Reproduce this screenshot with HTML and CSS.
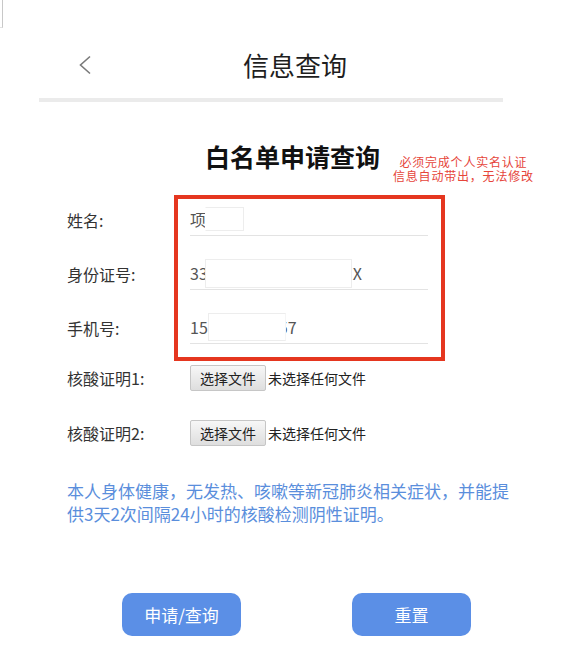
FILE: index.html
```html
<!DOCTYPE html>
<html lang="zh-CN">
<head>
<meta charset="utf-8">
<title>信息查询</title>
<link rel="stylesheet" href="styles.css">
</head>
<body>
<div class="corner"></div>
<header class="header">
  <svg class="back" width="14" height="20" viewBox="0 0 14 20"><polyline points="12,1.5 2.5,10 12,18.5" fill="none" stroke="#7a7a7a" stroke-width="1.6"/></svg>
  <h1 class="page-title">信息查询</h1>
</header>
<div class="bar"></div>

<div class="title-row">
  <h2 class="form-title">白名单申请查询</h2>
  <p class="note">必须完成个人实名认证<br>信息自动带出，无法修改</p>
</div>

<section class="form">
  <div class="highlight"></div>
  <div class="row">
    <span class="label">姓名:</span>
    <div class="field">项<span class="mask mask-name"></span></div>
  </div>
  <div class="row">
    <span class="label">身份证号:</span>
    <div class="field">33<span class="mask mask-id"></span>X</div>
  </div>
  <div class="row">
    <span class="label">手机号:</span>
    <div class="field">15<span class="mask mask-phone"></span>57</div>
  </div>
  <div class="file-row first">
    <span class="label">核酸证明1:</span>
    <div class="file"><span class="file-btn">选择文件</span><span class="file-name">未选择任何文件</span></div>
  </div>
  <div class="file-row">
    <span class="label">核酸证明2:</span>
    <div class="file"><span class="file-btn">选择文件</span><span class="file-name">未选择任何文件</span></div>
  </div>
</section>

<p class="notice">本人身体健康，无发热、咳嗽等新冠肺炎相关症状，并能提供3天2次间隔24小时的核酸检测阴性证明。</p>

<div class="actions">
  <button class="btn">申请/查询</button>
  <button class="btn">重置</button>
</div>
</body>
</html>
```

FILE: styles.css
```css
html, body {
  margin: 0;
  padding: 0;
  background: #ffffff;
}
body {
  font-family: "Noto Sans CJK SC", "Noto Sans", sans-serif;
  color: #333;
  position: relative;
  width: 568px;
  height: 647px;
  overflow: hidden;
}
.corner {
  position: absolute;
  left: 0;
  top: 0;
  width: 2px;
  height: 27px;
  border-right: 1px solid #c8c8c8;
  border-bottom: 1px solid #e2e2e2;
}
.header {
  height: 98px;
  box-sizing: border-box;
  padding: 32px 0 0 78px;
  display: flex;
  align-items: center;
}
.back {
  display: block;
}
.page-title {
  margin: 0 0 0 151px;
  font-size: 26px;
  font-weight: 400;
  line-height: 34px;
  color: #1e1e1e;
}
.bar {
  margin: 0 65px 0 39px;
  height: 4px;
  background: #ebebeb;
}
.title-row {
  display: flex;
  align-items: flex-start;
  margin-top: 39px;
  padding-left: 205px;
  height: 30px;
}
.form-title {
  margin: 0;
  font-size: 25px;
  line-height: 30px;
  font-weight: 700;
  color: #111;
}
.note {
  margin: 14px 0 0 13px;
  font-size: 12px;
  letter-spacing: 0.8px;
  line-height: 14px;
  color: #e6453a;
  text-align: center;
  white-space: nowrap;
}
.form {
  position: relative;
  margin-top: 32px;
  padding-left: 67px;
}
.highlight {
  position: absolute;
  left: 174px;
  top: -8px;
  width: 263px;
  height: 158px;
  border: 4px solid #e5361f;
  pointer-events: none;
}
.row {
  display: grid;
  grid-template-columns: 123px 238px;
  align-items: center;
  margin-bottom: 21px;
}
.label {
  font-size: 16px;
  color: #333;
  line-height: 22px;
}
.field {
  height: 32px;
  border-bottom: 1px solid #e3e3e3;
  display: flex;
  align-items: center;
  font-size: 16px;
  color: #555;
}
.mask {
  display: inline-block;
  background: #fff;
  border: 1px solid #ededed;
  position: relative;
  z-index: 1;
}
.mask-name {
  width: 37px;
  height: 22px;
  margin-left: -1px;
  border-left-color: #fff;
}
.mask-id {
  width: 145px;
  height: 27px;
  margin-left: -3px;
  margin-right: 1px;
}
.mask-phone {
  width: 76px;
  height: 26px;
  margin-left: 0;
  margin-right: -7px;
  border-right-color: #f5f5f5;
}
.file-row {
  display: grid;
  grid-template-columns: 123px auto;
  align-items: center;
  margin-top: 29px;
}
.file-row.first {
  margin-top: 5px;
}
.file {
  display: flex;
  align-items: center;
}
.file-btn {
  box-sizing: border-box;
  width: 76px;
  height: 26px;
  display: flex;
  align-items: center;
  justify-content: center;
  font-size: 14px;
  color: #222;
  background: linear-gradient(#f7f7f7, #dedede);
  border: 1px solid #c6c6c6;
  border-radius: 2px;
}
.file-name {
  margin-left: 2px;
  font-size: 14px;
  color: #222;
}
.notice {
  margin: 33px 0 0 67px;
  width: 450px;
  font-size: 17px;
  line-height: 23px;
  color: #5a8edc;
}
.actions {
  display: flex;
  gap: 111px;
  padding-left: 122px;
  margin-top: 68px;
}
.btn {
  width: 119px;
  height: 43px;
  border: none;
  border-radius: 10px;
  background: #5b8fe6;
  color: #fff;
  font-family: "Noto Sans CJK SC", "Noto Sans", sans-serif;
  font-size: 17px;
  padding: 0;
}
```
